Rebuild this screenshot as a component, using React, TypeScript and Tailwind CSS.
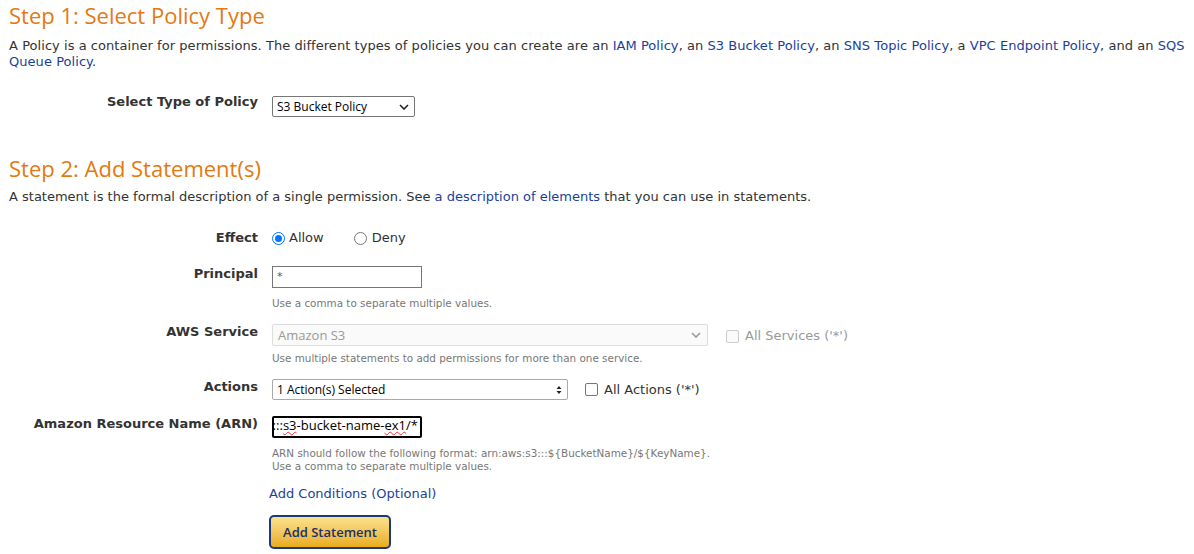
import React, { useState } from "react";

const body = { fontFamily: '"DejaVu Sans", Verdana, sans-serif' };
const head = { fontFamily: '"Open Sans", "Noto Sans", sans-serif' };
const ctl = { fontFamily: '"Open Sans", "Noto Sans", sans-serif' };

function Row({ label, children, labelCls = "" }: { label: string; children: React.ReactNode; labelCls?: string }) {
  return (
    <div className="flex items-start">
      <div className={`w-[249px] shrink-0 text-right text-[13px] font-bold leading-[16px] text-[#333] ${labelCls}`}>{label}</div>
      <div className="ml-[14px] flex-1">{children}</div>
    </div>
  );
}

const Hint = ({ children, cls = "" }: { children: React.ReactNode; cls?: string }) => (
  <div className={`text-[10.4px] leading-[13px] text-[#777] ${cls}`}>{children}</div>
);

export default function App() {
  const [effect, setEffect] = useState("allow");

  return (
    <div className="min-h-screen bg-white px-[9px] text-[13px] leading-[16px] text-[#333]" style={body}>
      <h1 className="pt-[1px] text-[22px] leading-[28px] text-[#e47911]" style={head}>
        Step 1: Select Policy Type
      </h1>
      <p className="mt-[9px] tracking-[0.05px]">
        A Policy is a container for permissions. The different types of policies you can create are an{" "}
        <a className="text-[#1a3f9b]">IAM Policy</a>, an <a className="text-[#1a3f9b]">S3 Bucket Policy</a>, an{" "}
        <a className="text-[#1a3f9b]">SNS Topic Policy</a>, a <a className="text-[#1a3f9b]">VPC Endpoint Policy</a>, and an{" "}
        <a className="text-[#1a3f9b]">SQS Queue Policy</a>.
      </p>

      <div className="mt-[26px]">
        <Row label="Select Type of Policy" labelCls="-mt-[2px]">
          <div className="flex h-[21px] w-[143px] items-center justify-between rounded-[2px] border border-[#767676] bg-white pl-[4px] pr-[5px] text-[12px] text-black" style={ctl}>
            <span>S3 Bucket Policy</span>
            <svg width="10" height="6" viewBox="0 0 10 6"><path d="M1 1l4 4 4-4" fill="none" stroke="#222" strokeWidth="1.6" /></svg>
          </div>
        </Row>
      </div>

      <h1 className="mt-[37px] text-[22px] leading-[28px] text-[#e47911]" style={head}>
        Step 2: Add Statement(s)
      </h1>
      <p className="mt-[7px]">
        A statement is the formal description of a single permission. See{" "}
        <a className="text-[#1a3f9b]">a description of elements</a> that you can use in statements.
      </p>

      <div className="mt-[25px] flex flex-col">
        <Row label="Effect">
          <div className="flex h-[16px] items-center">
            <label className="flex items-center" onClick={() => setEffect("allow")}>
              <span className={`flex h-[13px] w-[13px] items-center justify-center rounded-full border ${effect === "allow" ? "border-[#0075ff]" : "border-[#767676]"}`}>
                {effect === "allow" && <span className="h-[7px] w-[7px] rounded-full bg-[#0075ff]" />}
              </span>
              <span className="ml-[4px]">Allow</span>
            </label>
            <label className="ml-[30px] flex items-center" onClick={() => setEffect("deny")}>
              <span className={`flex h-[13px] w-[13px] items-center justify-center rounded-full border ${effect === "deny" ? "border-[#0075ff]" : "border-[#767676]"}`}>
                {effect === "deny" && <span className="h-[7px] w-[7px] rounded-full bg-[#0075ff]" />}
              </span>
              <span className="ml-[5px]">Deny</span>
            </label>
          </div>
        </Row>

        <div className="mt-[20px]">
          <Row label="Principal">
            <div className="flex h-[22px] w-[150px] items-center border border-[#767676] bg-white pl-[4px] text-[11px] text-[#555]">*</div>
            <Hint cls="mt-[9px]">Use a comma to separate multiple values.</Hint>
          </Row>
        </div>

        <div className="mt-[14px]">
          <Row label="AWS Service">
            <div className="flex items-center">
              <div className="flex h-[22px] w-[436px] items-center justify-between rounded-[2px] border border-[#ddd] bg-[#fafafa] pl-[5px] pr-[6px] text-[13px] text-[#999]" style={ctl}>
                <span>Amazon S3</span>
                <svg width="10" height="6" viewBox="0 0 10 6"><path d="M1 1l4 4 4-4" fill="none" stroke="#999" strokeWidth="1.6" /></svg>
              </div>
              <span className="ml-[18px] mt-[2px] h-[13px] w-[13px] rounded-[2px] border border-[#ccc] bg-[#fafafa]" />
              <span className="ml-[6px] mt-[2px] text-[#999]">All Services ('*')</span>
            </div>
            <Hint cls="mt-[6px]">Use multiple statements to add permissions for more than one service.</Hint>
          </Row>
        </div>

        <div className="mt-[14px]">
          <Row label="Actions">
            <div className="flex items-center">
              <div className="flex h-[21px] w-[296px] items-center justify-between rounded-[2px] border border-[#aaa] bg-white pl-[4px] pr-[5px] text-[12px] text-black" style={ctl}>
                <span>1 Action(s) Selected</span>
                <svg width="6" height="10" viewBox="0 0 6 10"><path d="M0.5 4L3 1l2.5 3zM0.5 6L3 9l2.5-3z" fill="#222" /></svg>
              </div>
              <span className="ml-[17px] h-[13px] w-[13px] rounded-[2px] border border-[#767676] bg-white" />
              <span className="ml-[6px]">All Actions ('*')</span>
            </div>
          </Row>
        </div>

        <div className="mt-[16px]">
          <Row label="Amazon Resource Name (ARN)">
            <div className="flex h-[22px] w-[150px] items-start justify-end overflow-hidden whitespace-nowrap rounded-[2px] border-2 border-black bg-white pr-[2px] text-[13px] leading-[15px] text-black" style={ctl}>
              <span>
                arn:aws:s3:::<span className="underline decoration-red-500 decoration-wavy decoration-1 underline-offset-[1px]">s3</span>-bucket-name-<span className="underline decoration-red-500 decoration-wavy decoration-1 underline-offset-[1px]">ex1</span>/*
              </span>
            </div>
            <Hint cls="mt-[9px]">
              <div>ARN should follow the following format: arn:aws:s3:::${"{"}BucketName{"}"}/${"{"}KeyName{"}"}.</div>
              <div>Use a comma to separate multiple values.</div>
            </Hint>
          </Row>
        </div>

        <div className="ml-[260px] mt-[13px]">
          <a className="block text-[#1a3f9b]">Add Conditions (Optional)</a>
          <div className="mt-[13px]">
            <button className="h-[34px] w-[122px] rounded-[5px] border-2 border-[#1b3a7c] bg-gradient-to-b from-[#fbe28c] to-[#e9ac12] text-[13px] font-semibold text-[#1b2f6b]" style={ctl}>
              Add Statement
            </button>
          </div>
        </div>
      </div>
    </div>
  );
}
